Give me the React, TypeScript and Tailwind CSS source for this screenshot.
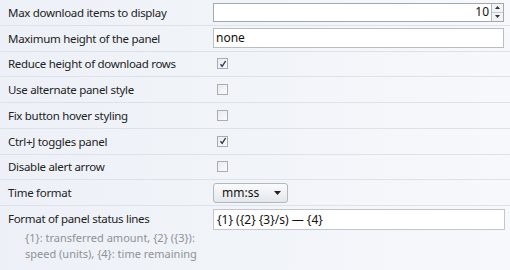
import React from "react";

const font = { fontFamily: '"Noto Sans", Verdana, sans-serif' };

function Check({ on }: { on?: boolean }) {
  return (
    <div className="ml-[4px] flex h-[11px] w-[11px] items-center justify-center border border-[#a9adb3] bg-gradient-to-br from-[#e8eaed] to-[#fbfbfc]">
      {on && (
        <svg width="8" height="8" viewBox="0 0 8 8">
          <path d="M1.5 4.2 L3.2 6.4 L6.6 1" fill="none" stroke="#2b3a55" strokeWidth="1.4" />
        </svg>
      )}
    </div>
  );
}

function Row({ label, children }: { label: string; children?: React.ReactNode }) {
  return (
    <div className="flex h-[25.75px] items-center border-b border-[#dde1e8]">
      <div className="w-[213px] whitespace-nowrap pl-[8px] text-[11.5px] tracking-[-0.3px] text-[#222]">{label}</div>
      <div className="flex flex-1 items-center pr-[6px] text-[12px]">{children}</div>
    </div>
  );
}

export default function App() {
  return (
    <div
      className="h-[270px] w-[510px] overflow-hidden bg-gradient-to-r from-[#edf1f7] via-[#f1f4f9] to-[#f7f8fb]"
      style={font}
    >
      <Row label="Max download items to display">
        <div className="flex h-[19px] flex-1 items-stretch border border-[#a3a8b0] bg-white">
          <div className="flex flex-1 items-center justify-end pr-[2px] text-[#111]">10</div>
          <div className="flex w-[12px] flex-col border-l border-[#b6bac0] bg-[#f2f3f5]">
            <div className="flex flex-1 items-center justify-center border-b border-[#c8ccd1]">
              <svg width="5" height="3" viewBox="0 0 5 3"><path d="M0 3 L2.5 0 L5 3Z" fill="#333" /></svg>
            </div>
            <div className="flex flex-1 items-center justify-center">
              <svg width="5" height="3" viewBox="0 0 5 3"><path d="M0 0 L2.5 3 L5 0Z" fill="#333" /></svg>
            </div>
          </div>
        </div>
      </Row>
      <Row label="Maximum height of the panel">
        <div className="flex h-[20px] flex-1 items-center border border-[#b9bdc4] bg-white pl-[2px] text-[#111]">none</div>
      </Row>
      <Row label="Reduce height of download rows"><Check on /></Row>
      <Row label="Use alternate panel style"><Check /></Row>
      <Row label="Fix button hover styling"><Check /></Row>
      <Row label="Ctrl+J toggles panel"><Check on /></Row>
      <Row label="Disable alert arrow"><Check /></Row>
      <Row label="Time format">
        <div className="flex h-[20px] w-[75px] items-center justify-between rounded-[3px] border border-[#b3b8bf] bg-gradient-to-b from-[#fafbfc] to-[#e4e7eb] pl-[8px] pr-[6px] text-[#111]">
          <span>mm:ss</span>
          <svg width="7" height="4" viewBox="0 0 7 4"><path d="M0 0 L3.5 4 L7 0Z" fill="#222" /></svg>
        </div>
      </Row>
      <div className="flex pt-[3px]">
        <div className="w-[213px]">
          <div className="flex h-[20px] items-center whitespace-nowrap pl-[8px] text-[11.5px] tracking-[-0.3px] text-[#222]">Format of panel status lines</div>
          <div className="whitespace-nowrap pl-[25px] pt-[1px] text-[11px] leading-[16px] text-[#8e9196]">
            {"{1}: transferred amount, {2} ({3}):"}
            <br />
            {"speed (units), {4}: time remaining"}
          </div>
        </div>
        <div className="flex-1 pr-[5px] text-[12px]">
          <div className="flex h-[21px] items-center border border-[#c3c7cd] bg-white pl-[3px] text-[#111]">
            {"{1} ({2} {3}/s) \u2014 {4}"}
          </div>
        </div>
      </div>
    </div>
  );
}
